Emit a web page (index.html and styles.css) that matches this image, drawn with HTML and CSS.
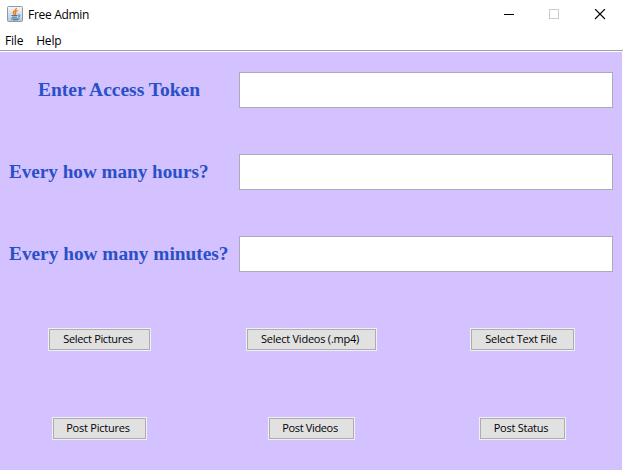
FILE: index.html
```html
<!DOCTYPE html>
<html lang="en">
<head>
<meta charset="utf-8">
<title>Free Admin</title>
<link rel="stylesheet" href="styles.css">
</head>
<body>
<div class="window">
  <header class="titlebar">
    <svg class="app-icon" width="16" height="16" viewBox="0 0 16 16">
      <defs><linearGradient id="tile" x1="0" y1="0" x2="0" y2="1"><stop offset="0" stop-color="#f4f7f9"/><stop offset="1" stop-color="#b9c7d3"/></linearGradient></defs>
      <rect x=".5" y=".5" width="15" height="15" rx="1" fill="url(#tile)" stroke="#8a9ba9"/>
      <path d="M9.300 2C10 4 6 4.800 6.300 6.600C6.400 7.600 7.500 8 7.400 8.900M10.600 4.600C8.300 5.300 7.700 6.200 8.600 7.200C8.900 7.700 8.700 8.200 8.300 8.800" fill="none" stroke="#f07f1c" stroke-width="1.400"/>
      <path d="M4.500 9.500H10.500M5 11.200H10M4 13H11M11 9C13.600 8.400 13.400 10.800 11 11.300M12.600 12.500C12 13.600 9 14.100 6 13.900" fill="none" stroke="#44799f"/>
    </svg>
    <h1 class="title">Free Admin</h1>
    <svg class="controls" width="103" height="12" viewBox="0 0 103 12" shape-rendering="crispEdges">
      <path d="M0 5.500H10" stroke="#000"/>
      <rect x="45.500" y=".5" width="9" height="9" fill="none" stroke="#ccc"/>
      <path d="M91 0L101 10M101 0L91 10" stroke="#000" stroke-width="1.100" shape-rendering="auto"/>
    </svg>
  </header>
  <nav class="menubar"><span class="file">File</span><span class="help">Help</span></nav>
  <main class="content">
    <div class="field"><label class="token" for="token">Enter Access Token</label><input id="token" type="text"></div>
    <div class="field"><label class="hours" for="hours">Every how many hours?</label><input id="hours" type="text"></div>
    <div class="field"><label class="minutes" for="minutes">Every how many minutes?</label><input id="minutes" type="text"></div>
    <div class="actions">
      <button class="w103 tight"><span>Select Pictures</span></button>
      <button class="w131"><span>Select Videos (.mp4)</span></button>
      <button class="w105"><span>Select Text File</span></button>
      <button class="w95"><span>Post Pictures</span></button>
      <button class="w87 tight"><span>Post Videos</span></button>
      <button class="w87"><span>Post Status</span></button>
    </div>
  </main>
</div>
</body>
</html>
```
FILE: styles.css
```css
* { box-sizing: border-box; }
body { margin: 0; background: #fff; color: #000; }
.window { width: 623px; height: 472px; overflow: hidden; }
.titlebar { display: flex; height: 30px; padding: 6px 16px 0 7px; align-items: flex-start; }
.app-icon { flex: none; }
.title { margin: 0 auto 0 5px; font: 12px/18px "Open Sans", sans-serif; letter-spacing: -.3px; }
.controls { margin-top: 3px; }
.menubar { display: flex; gap: 13px; height: 21px; padding-left: 5px; border-bottom: 1px solid #a0a0a0; font: 12px/22px "Open Sans", sans-serif; letter-spacing: -.2px; }
.content { width: 622px; height: 418px; margin-top: 1px; padding-top: 20px; background: #d4c1ff; }
.field { display: flex; align-items: center; justify-content: space-between; height: 36px; margin: 0 9px 46px; }
.field label { color: #2850c8; font: bold 18px/24px "Liberation Serif", serif; white-space: nowrap; transform: scaleX(1.073); transform-origin: left; }
.field .token { margin-left: 29px; transform: scaleX(1.083); }
.field .hours { transform: scaleX(1.064); }
.field input { width: 374px; height: 36px; border: 1px solid #abadb3; background: #fff; padding: 4px; outline: 0; }
.actions { display: grid; grid-template-columns: 200px 224px 198px; grid-template-rows: 23px 23px; row-gap: 66px; margin: 56px 0 0 -1px; justify-items: center; }
.actions button { height: 23px; padding: 0 2px 2px 0; border: 1px solid #f0f0f0; background: #e1e1e1; box-shadow: inset 0 0 0 1px #adadad; font: 11px/19px "Open Sans", sans-serif; letter-spacing: -.23px; color: #000; white-space: nowrap; }
.actions .tight { letter-spacing: -.34px; }
.w103 { width: 103px; }
.w131 { width: 131px; }
.w105 { width: 105px; }
.w95 { width: 95px; }
.w87 { width: 87px; }
```
